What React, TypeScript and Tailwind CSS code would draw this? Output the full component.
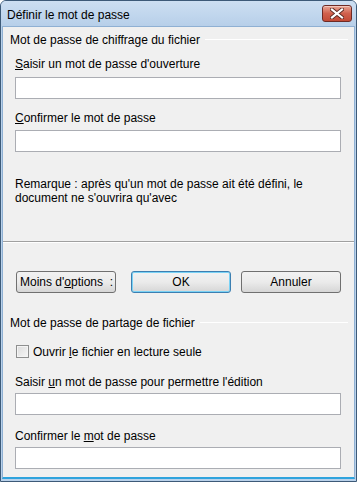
import React from 'react';

function Heading({ text }: { text: string }) {
  return (
    <div className="flex items-center gap-[5px] pl-[7px] pr-[6px] h-[15px]">
      <span className="whitespace-nowrap">{text}</span>
      <div className="flex-1 h-px bg-[#a0a0a0] border-b border-white" />
    </div>
  );
}

function TextBox({ top }: { top: string }) {
  return <div className={`${top} ml-[12px] w-[326px] h-[22px] bg-white border border-[#abadb3]`} />;
}

function Btn({ children, def, left }: { children: React.ReactNode; def?: boolean; left?: boolean }) {
  return (
    <div
      className={`w-[100px] h-[22px] rounded-[3px] border flex items-center overflow-hidden whitespace-nowrap bg-gradient-to-b from-[#f2f2f2] via-[#ebebeb] to-[#d6d6d6] ${
        def ? 'border-[#3c7fb1] shadow-[inset_0_0_0_1px_#7ad2f5]' : 'border-[#707070]'
      } ${left ? 'justify-start pl-[3px]' : 'justify-center'}`}
    >
      {children}
    </div>
  );
}

export default function App() {
  return (
    <div
      className="w-[357px] h-[482px] flex flex-col bg-[#b9d1ea] border border-[#3d5a78] rounded-t-[6px] overflow-hidden text-[12px] text-black"
      style={{ fontFamily: '"Liberation Sans", Arial, sans-serif' }}
    >
      <div className="h-[25px] shrink-0 flex items-start justify-between pl-[6px] pr-[4px] bg-gradient-to-b from-[#cddff2] to-[#b7cfe9]">
        <span className="mt-[5px] text-[12px]">Définir le mot de passe</span>
        <div className="mt-[4px] w-[30px] h-[17px] rounded-[3px] border border-[#6e2a25] bg-gradient-to-b from-[#e8a595] via-[#d0604d] to-[#c24a36] flex items-center justify-center shadow-[inset_0_1px_0_#f3c7bc]">
          <svg width="14" height="11" viewBox="0 0 14 11">
            <path d="M2 1.5 L12 9.5 M12 1.5 L2 9.5" stroke="#5a2a24" strokeWidth="4" strokeLinecap="square" />
            <path d="M2 1.5 L12 9.5 M12 1.5 L2 9.5" stroke="#ffffff" strokeWidth="2.2" strokeLinecap="square" />
          </svg>
        </div>
      </div>
      <div className="flex-1 mx-[1px] mb-[2px] bg-[#f0f0f0] border border-[#8fb0d3] border-b-[#2fa3dd] border-b-[2px] flex flex-col">
        <div className="mt-[5px]">
          <Heading text="Mot de passe de chiffrage du fichier" />
        </div>
        <div className="mt-[10px] ml-[12px] h-[15px] leading-[15px]">
          <span className="underline">S</span>aisir un mot de passe d'ouverture
        </div>
        <TextBox top="mt-[5px]" />
        <div className="mt-[12px] ml-[12px] h-[15px] leading-[15px]">
          <span className="underline">C</span>onfirmer le mot de passe
        </div>
        <TextBox top="mt-[4px]" />
        <div className="mt-[25px] ml-[12px] leading-[14px] w-[320px]">
          Remarque : après qu'un mot de passe ait été défini, le document ne s'ouvrira qu'avec
        </div>
        <div className="mt-[36px] h-px bg-[#a0a0a0] border-b border-white box-content" />
        <div className="mt-[28px] flex items-center ml-[13px]">
          <Btn left>
            Moins d'<span className="underline">o</span>ptions&nbsp;&nbsp;:
          </Btn>
          <div className="ml-[15px]">
            <Btn def>OK</Btn>
          </div>
          <div className="ml-[10px]">
            <Btn>Annuler</Btn>
          </div>
        </div>
        <div className="mt-[22px]">
          <Heading text="Mot de passe de partage de fichier" />
        </div>
        <div className="mt-[15px] ml-[13px] flex items-center gap-[4px] h-[13px]">
          <div className="w-[13px] h-[13px] border border-[#8e8f8f] bg-gradient-to-br from-[#dcdcdc] to-[#f6f6f6] shadow-[inset_0_0_0_1px_#f4f4f4]" />
          <span>
            Ouvrir <span className="underline">l</span>e fichier en lecture seule
          </span>
        </div>
        <div className="mt-[17px] ml-[12px] h-[15px] leading-[15px]">
          Saisir <span className="underline">u</span>n mot de passe pour permettre l'édition
        </div>
        <TextBox top="mt-[3px]" />
        <div className="mt-[14px] ml-[12px] h-[15px] leading-[15px]">
          Confirmer le <span className="underline">m</span>ot de passe
        </div>
        <TextBox top="mt-[3px]" />
      </div>
    </div>
  );
}
